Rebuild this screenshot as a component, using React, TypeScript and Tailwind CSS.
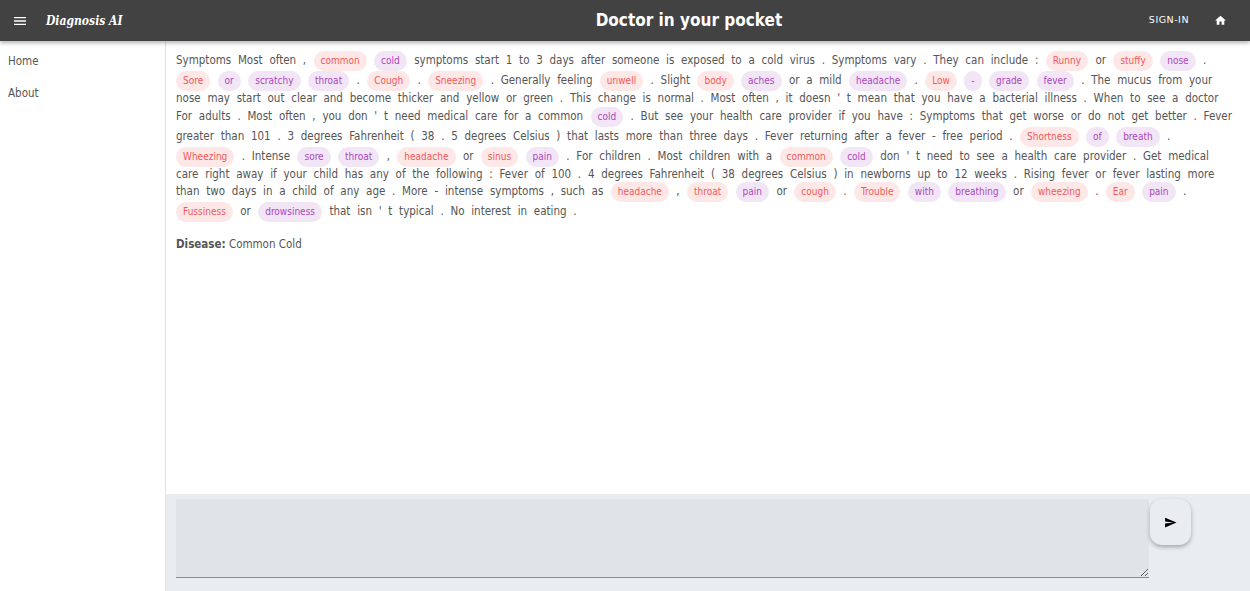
import { MdHome, MdMenu, MdSend } from "react-icons/md";

// {x} = red chip, [x] = purple chip
const lines = [
  "Symptoms Most often , {common} [cold] symptoms start 1 to 3 days after someone is exposed to a cold virus . Symptoms vary . They can include : {Runny} or {stuffy} [nose] .",
  "{Sore} [or] [scratchy] [throat] . {Cough} . {Sneezing} . Generally feeling {unwell} . Slight {body} [aches] or a mild [headache] . {Low} [-] [grade] [fever] . The mucus from your",
  "nose may start out clear and become thicker and yellow or green . This change is normal . Most often , it doesn ' t mean that you have a bacterial illness . When to see a doctor",
  "For adults . Most often , you don ' t need medical care for a common [cold] . But see your health care provider if you have : Symptoms that get worse or do not get better . Fever",
  "greater than 101 . 3 degrees Fahrenheit ( 38 . 5 degrees Celsius ) that lasts more than three days . Fever returning after a fever - free period . {Shortness} [of] [breath] .",
  "{Wheezing} . Intense [sore] [throat] , {headache} or {sinus} [pain] . For children . Most children with a {common} [cold] don ' t need to see a health care provider . Get medical",
  "care right away if your child has any of the following : Fever of 100 . 4 degrees Fahrenheit ( 38 degrees Celsius ) in newborns up to 12 weeks . Rising fever or fever lasting more",
  "than two days in a child of any age . More - intense symptoms , such as {headache} , {throat} [pain] or {cough} . {Trouble} [with] [breathing] or {wheezing} . {Ear} [pain] .",
  "{Fussiness} or [drowsiness] that isn ' t typical . No interest in eating .",
];

const Line = ({ text }: { text: string }) => {
  const parts = text.split(/(\{[^}]+\}|\[[^\]]+\])/).filter((p) => p.trim() !== "");
  return (
    <div className="whitespace-nowrap">
      {parts.map((p, i) => {
        if (p[0] === "{")
          return (
            <span key={i} className="inline-block h-5 leading-5 mx-[3.7px] first:ml-0 px-[7px] rounded-[10px] bg-[#fde7e7] text-[#f55858] text-[10px] [word-spacing:0] align-baseline">
              {p.slice(1, -1)}
            </span>
          );
        if (p[0] === "[")
          return (
            <span key={i} className="inline-block h-5 leading-5 mx-[3.7px] first:ml-0 px-[7px] rounded-[10px] bg-[#f2e5f6] text-[#ab47bc] text-[10px] [word-spacing:0] align-baseline">
              {p.slice(1, -1)}
            </span>
          );
        return <span key={i} className="mx-[3.7px] first:ml-0">{p.trim()}</span>;
      })}
    </div>
  );
};

export default function App() {
  return (
    <div className="h-[591px] w-[1250px] overflow-hidden flex flex-col bg-white font-['DejaVu_Sans',sans-serif] font-stretch-condensed text-[#555555]">
      <header className="h-[41px] shrink-0 bg-[#424242] text-white flex items-center shadow-[0_2px_4px_rgba(0,0,0,0.3)] z-10">
        <MdMenu size={16} className="ml-3" />
        <span className="ml-[18px] w-[76px] whitespace-nowrap font-['DejaVu_Serif',serif] italic font-bold text-[12px]">Diagnosis AI</span>
        <div className="flex-1 text-center font-bold text-[17px] pl-[107px]">Doctor in your pocket</div>
        <span className="text-[9.5px] font-stretch-normal tracking-[0.5px] mr-[25px]">SIGN-IN</span>
        <MdHome size={13} className="mr-[23px]" />
      </header>
      <div className="flex-1 flex min-h-0">
        <nav className="w-[166px] shrink-0 border-r border-[#e0e0e0] text-[11.5px] pl-2 pt-[12px]">
          <div className="h-4 leading-4">Home</div>
          <div className="h-4 leading-4 mt-4">About</div>
        </nav>
        <main className="flex-1 flex flex-col min-w-0">
          <div className="flex-1 pl-[10px] pt-[10px] text-[11.5px] leading-[15.5px] [word-spacing:3.46px]">
            {lines.map((l, i) => (
              <Line key={i} text={l} />
            ))}
            <p className="mt-[15px] [word-spacing:0]">
              <b>Disease:</b> Common Cold
            </p>
          </div>
          <div className="h-[97px] shrink-0 bg-[#e9edf0] pl-[10px] pt-[5px] flex items-start">
            <textarea className="block w-[973px] h-[79px] bg-[#e1e4e7] border-b border-[#8c8c8c] rounded-t-[2px] outline-none" />
            <button className="ml-px w-[41px] h-[46px] rounded-xl bg-[#e9edf0] flex items-center justify-center shadow-[0_2px_4px_rgba(0,0,0,0.3)]">
              <MdSend size={13} className="text-black" />
            </button>
          </div>
        </main>
      </div>
    </div>
  );
}
